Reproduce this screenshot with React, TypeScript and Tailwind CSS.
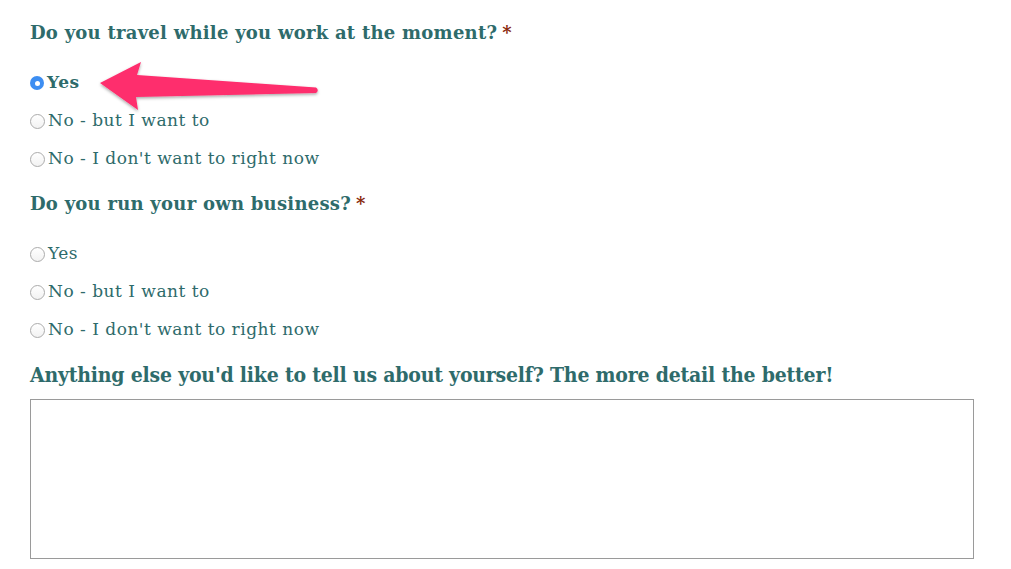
import React from "react";

const teal = "text-[#2e6b6b]";

function Radio({ checked }: { checked?: boolean }) {
  if (checked) {
    return (
      <span className="flex h-[14px] w-[14px] shrink-0 items-center justify-center rounded-full bg-[#3d8ef2]">
        <span className="h-[5px] w-[5px] rounded-full bg-white" />
      </span>
    );
  }
  return (
    <span className="h-[15px] w-[15px] shrink-0 rounded-full border border-[#ababab] bg-gradient-to-b from-white to-[#f2f2f2]" />
  );
}

function Option({ label, checked }: { label: string; checked?: boolean }) {
  return (
    <label className="flex h-[38px] items-center gap-[3px]">
      <Radio checked={checked} />
      <span
        className={`${teal} text-[17px] tracking-[0.5px] ${checked ? "font-bold" : ""}`}
      >
        {label}
      </span>
    </label>
  );
}

function Heading({ children, req }: { children: React.ReactNode; req?: boolean }) {
  return (
    <div className="flex h-6 items-center">
      <span className={`${teal} text-[18px] font-bold tracking-[0.25px]`}>{children}</span>
      {req && <span className="ml-[5px] text-[18px] font-bold text-[#8a2a0c]">*</span>}
    </div>
  );
}

export default function App() {
  return (
    <div className="relative h-[569px] w-[1011px] overflow-hidden bg-white font-['DejaVu_Serif',serif]">
      <div className="flex flex-col pl-[30px] pt-[20px]">
        <Heading req>Do you travel while you work at the moment?</Heading>
        <div className="mt-[20px] flex flex-col">
          <Option label="Yes" checked />
          <Option label="No - but I want to" />
          <Option label="No - I don't want to right now" />
        </div>
        <div className="mt-[13px]">
          <Heading req>Do you run your own business?</Heading>
        </div>
        <div className="mt-[20px] flex flex-col">
          <Option label="Yes" />
          <Option label="No - but I want to" />
          <Option label="No - I don't want to right now" />
        </div>
        <div className="mt-[14px] flex h-6 items-center">
          <span className={`${teal} text-[21px] font-bold [font-stretch:condensed] tracking-[-0.2px]`}>
            Anything else you'd like to tell us about yourself? The more detail the better!
          </span>
        </div>
        <textarea className="mt-[12px] h-[160px] w-[944px] resize-none border border-[#9a9a9a] bg-white outline-none" />
      </div>

      <svg
        className="pointer-events-none absolute left-0 top-0"
        width="1011"
        height="569"
        viewBox="0 0 1011 569"
      >
        <defs>
          <filter id="sh" x="-20%" y="-50%" width="140%" height="200%">
            <feDropShadow dx="0" dy="1.5" stdDeviation="1.5" floodColor="#000" floodOpacity="0.35" />
          </filter>
        </defs>
        <path
          d="M100 83 L141 62 L137 75 L316 87.5 Q319.5 90 316 93 L136 97 L138 110 Z"
          fill="#fe2d6d"
          filter="url(#sh)"
          strokeLinejoin="round"
        />
      </svg>
    </div>
  );
}
